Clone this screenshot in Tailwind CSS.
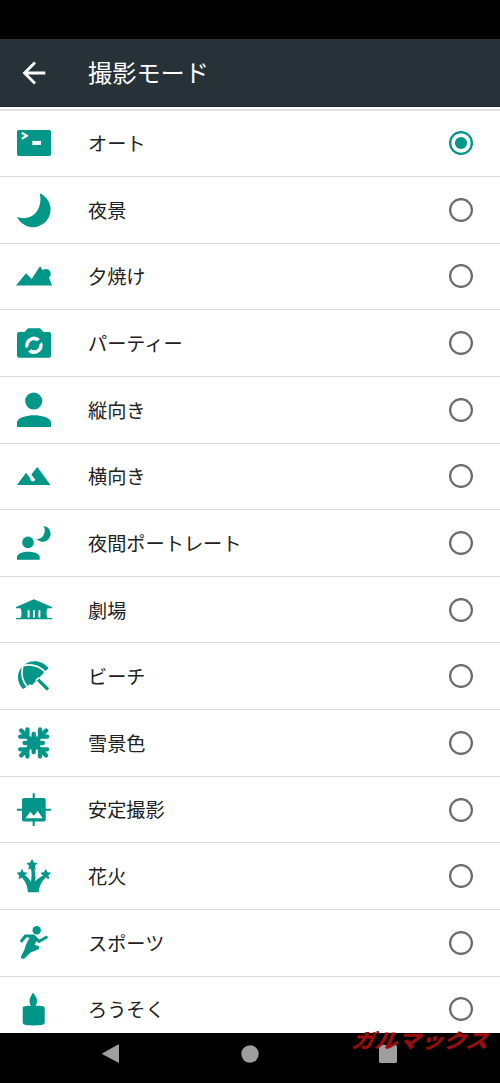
<!DOCTYPE html>
<html lang="ja">
<head>
<meta charset="utf-8">
<title>撮影モード</title>
<script src="https://cdn.jsdelivr.net/npm/@tailwindcss/browser@4"></script>
</head>
<body class="bg-black">
<main class="relative flex h-[1083px] w-[500px] flex-col overflow-hidden bg-black font-['Noto_Sans_CJK_JP',sans-serif]">
  <div class="h-[39px] shrink-0 bg-black"></div>
  <header class="flex h-[68px] shrink-0 items-center border-b border-[#1c262b] bg-[#263238] pl-[22px] text-white">
    <svg class="h-6 w-6" viewBox="0 0 24 24" fill="none" stroke="currentColor" stroke-width="2.8"><path d="M23.300 12H3M13 1.500 2.500 12 13 22.500"/></svg>
    <h1 class="pl-[42px] text-[24.2px] leading-none">撮影モード</h1>
  </header>
  <div class="w-full shrink-0 grow-0 basis-[926px] overflow-hidden bg-white pt-[2px] text-[#212121]">
    <div class="h-[2px] bg-[#e0e0e0]"></div>
    <ul id="modes" class="-mt-[0.7px]"></ul>
  </div>
  <nav class="flex h-[50px] shrink-0 items-start pl-[101px] pt-[11px]">
    <svg class="h-5 w-[296px]" viewBox="0 0 296 20" fill="#9e9e9e"><path d="M1.500 9.200 17 .6q1-.5 1 .5v17q0 1-1 .5L1.500 10.200q-.8-.5 0-1z"/><circle cx="149" cy="10" r="8.700"/><rect x="278" y="1" width="18" height="18" rx="1.500"/></svg>
  </nav>
  <div class="absolute left-[354px] top-[1030px] origin-left scale-x-[1.16] -skew-x-[20deg] whitespace-nowrap text-[20px] font-black leading-[20px] tracking-[-0.3px] text-[#970d10]">ガルマックス</div>
</main>
<template id="row">
  <li class="flex h-[66.65px] items-center border-b border-[#dcdcdc] pl-[14px] pr-[27px]">
    <svg class="h-10 w-10 shrink-0 text-[#009688]" viewBox="0 0 40 40" fill="currentColor"></svg>
    <span class="grow pl-[34px] pt-px text-[19.2px] leading-none"></span>
    <i class="flex size-6 shrink-0 items-center justify-center"></i>
  </li>
</template>
<script>
const star = (x, y, r) => {
  let p = [];
  for (let i = 0; i < 10; i++) {
    const a = -Math.PI / 2 + i * Math.PI / 5, q = i % 2 ? r * .48 : r;
    p.push((x + q * Math.cos(a)).toFixed(1) + ',' + (y + q * Math.sin(a)).toFixed(1));
  }
  return `<polygon points="${p.join(' ')}" stroke="currentColor" stroke-width="1" stroke-linejoin="round"/>`;
};
const flakeArm = a => `<path transform="rotate(${a} 19.700 20)" d="M19.700 20V10.800M19.700 20 7.200 7.500M13.400 13.700V6.500M13.400 13.700H6.200"/>`;
const modes = [
  ['オート', '<rect x="3" y="7" width="34" height="26" rx="1.800"/><path d="M7.800 9.700 12.700 12.800 7.800 15.900" fill="none" stroke="#fff" stroke-width="2.200"/><path fill="#fff" d="M18.300 17.900H27V21.900H18.300z"/>'],
  ['夜景', '<path d="M25.700 3.300A17.600 17.600 0 1 1 3 27C11 30 20 27 24 19.500C26.500 14.500 27 9 25.700 3.300z"/>'],
  ['夕焼け', '<path d="M2 29.500 12 17.200 17.700 22.900 26 10.300 28.900 14.200A4.200 4.200 0 1 1 35 21.500L38 29.500z"/>'],
  ['パーティー', '<path d="M5 9H10.500L14 5.300H26L29.500 9H35Q37 9 37 11V32.700Q37 34.700 35 34.700H5Q3 34.700 3 32.700V11Q3 9 5 9z"/><path fill="#fff" d="M11.300 22.300A8.700 8.700 0 0 1 26 16.100L23 18.300C19 15.800 14.800 18 14.500 23.200L12.200 25.500Q11.300 24 11.300 22.300zM28.700 22.300A8.700 8.700 0 0 1 14 28.500L17 26.300C21 28.800 25.200 26.600 25.500 21.400L27.800 19.100Q28.700 20.600 28.700 22.300z"/>'],
  ['縦向き', '<circle cx="19.700" cy="11" r="8.600"/><path d="M3 37V32.500C3 27.500 13.500 25.200 20 25.200S37 27.500 37 32.500V37z"/>'],
  ['横向き', '<path d="M3 28.900 12 16.700 16.200 22.300Q16.500 25.400 18.900 25.500 20.800 25.400 21.300 23.800L17.300 18.600 23.300 10.900 36.500 28.900z"/>'],
  ['夜間ポートレート', '<circle cx="14" cy="19.400" r="5.800"/><path d="M3 36.800V34C3 30.500 9.500 28.700 14.300 28.700S25.700 30.500 25.700 34V36.800z"/><path d="M29.700 3A7.900 7.900 0 1 1 22.700 16C28 17 33 10 29.700 3z"/>'],
  ['劇場', '<path d="M20 9.300 38 17V18.300H33.500Q32.500 20 32.500 23T33.500 27.900H38V29.300H2V27.900H6.500Q7.500 26 7.500 23T6.500 18.300H2V17z"/><path d="M14.600 20.300V27.500M20 20.300V27.500M25.400 20.300V27.500" stroke="#fff" stroke-width="2"/>'],
  ['ビーチ', '<path d="M9 33C2 26 2.500 15.300 9.300 9.700C16.500 3 28.500 4 34.500 12.300L30.500 15.800L12.800 30.800z"/><path d="M8.700 10C6.800 18 8.800 26 13.800 31.500M9 9.700C17 7.800 25.500 10.300 31.500 16.200" fill="none" stroke="#fff" stroke-width="1.700"/><path d="M15 27.200Q16.300 29 18 29L29.300 17.500Q29.200 15.500 27.500 14.500z"/><path d="M22.900 22.500 25.200 24.800" stroke="#fff" stroke-width="4.500"/><path d="M24 23.700 34 33.500" stroke="currentColor" stroke-width="3.200"/>'],
  ['雪景色', `<g fill="none" stroke="currentColor" stroke-width="4.300" stroke-linecap="round">${[0, 90, 180, 270].map(flakeArm).join('')}</g><circle cx="19.700" cy="20" r="7"/>`],
  ['安定撮影', '<rect x="8" y="8" width="23.700" height="23.600" rx="1.800"/><path d="M19.700 3.300V36M3 19.700H37" stroke="currentColor" stroke-width="2.100"/><path fill="#fff" d="M11.500 28.300 16.300 21.800 19.700 25.700 23.700 20.900 28.700 28.300z"/>'],
  ['花火', star(18, 9, 5.2) + star(8, 18.6, 4.9) + star(31.7, 18.6, 4.9) + '<path d="M14 36.300C13.500 31 12 26 8 21.800L11 19.300C14 21.500 15.800 23.500 16.800 26C17.800 21.500 17.800 16.500 16.800 12L20 11.500C21.400 16 21.700 21 21.300 25.500C23 23 26 21 29 19.500L31.200 22.300C27.200 25.500 25.200 31 24.700 36.300z"/>'],
  ['スポーツ', '<circle cx="22.700" cy="7.300" r="4.200"/><path d="M7.600 18 11.400 13H19.500L25 18.500 32.300 14.200" fill="none" stroke="currentColor" stroke-width="3" stroke-linecap="round" stroke-linejoin="round"/><path d="M14 12H19.500Q23 13 23.500 17L20.500 21.700 24.500 23Q26 24.500 24.500 26.300L16.500 29.500 10.500 35.500Q8 36.500 6.700 34.300L10.500 26.500Q11.500 21.500 15.500 15z"/>'],
  ['ろうそく', '<path d="M19 3.600C21 6.500 23 9 23 12Q23 15 21.500 16.700C28 16.700 30.700 17.300 30.700 18.600V34Q30.700 36.500 19.700 36.500T8.700 34V18.600C8.700 17.300 12 16.700 17 16.700Q15.500 15 15.500 12C15.500 9 17.300 7 19 3.600z"/>']
];
const list = document.getElementById('modes');
modes.forEach(([name, icon], i) => {
  const row = document.getElementById('row').content.cloneNode(true);
  row.querySelector('svg').innerHTML = icon;
  row.querySelector('span').textContent = name;
  row.querySelector('i').innerHTML = i
    ? '<svg class="size-6 text-[#6d6d6d]" viewBox="0 0 24 24" fill="none" stroke="currentColor" stroke-width="2.300"><circle cx="12" cy="12" r="10.900"/></svg>'
    : '<svg class="size-6 text-[#009688]" viewBox="0 0 24 24" fill="none" stroke="currentColor" stroke-width="2.300"><circle cx="12" cy="12" r="10.900"/><circle cx="12" cy="12" r="6.100" fill="currentColor" stroke="none"/></svg>';
  list.appendChild(row);
});
</script>
</body>
</html>
